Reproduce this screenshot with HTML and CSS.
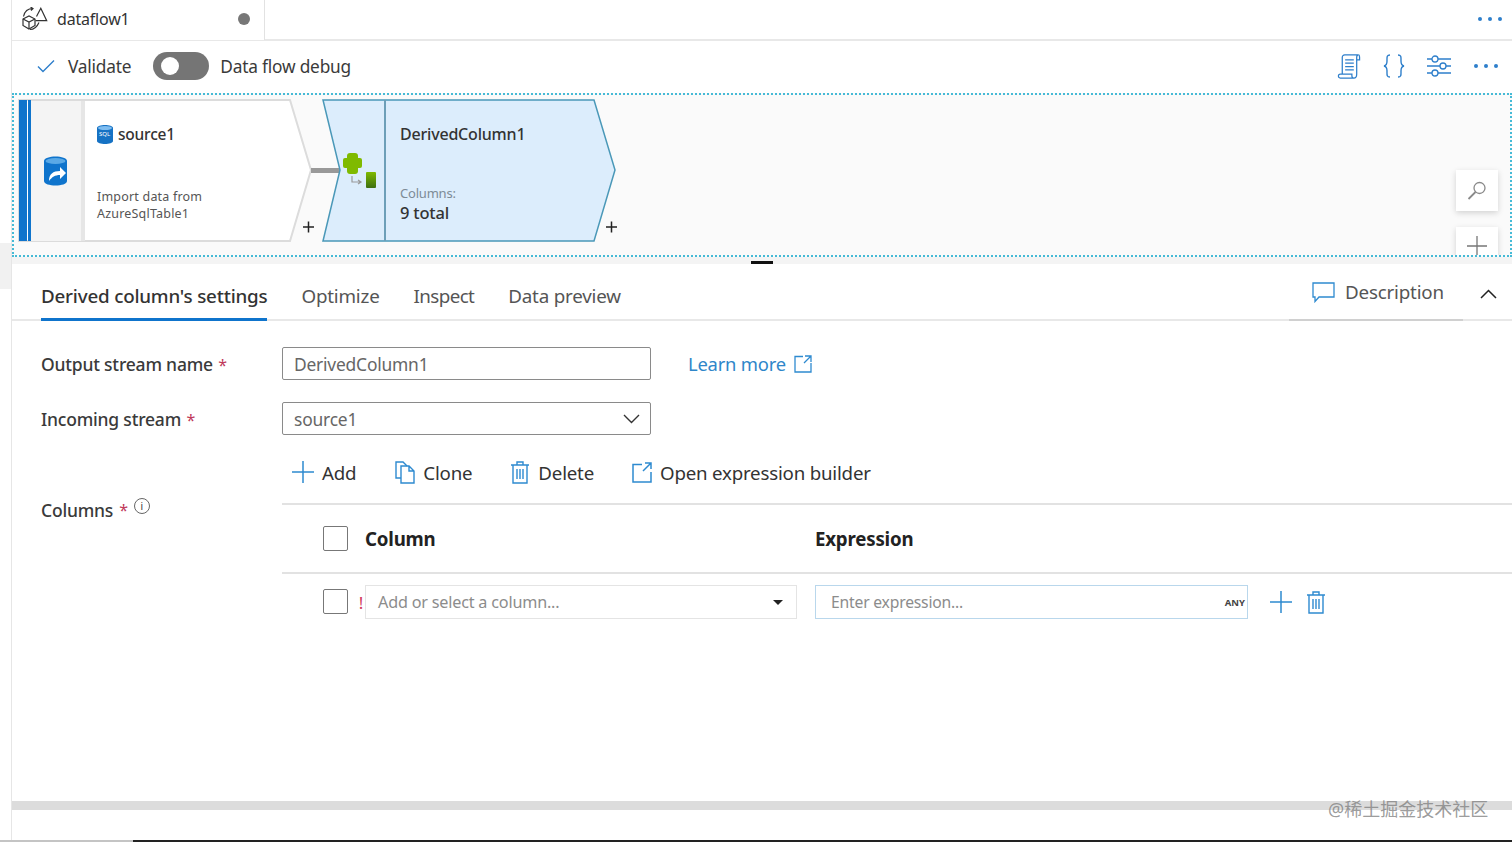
FILE: index.html
```html
<!DOCTYPE html>
<html lang="en">
  <head>
    <meta charset="UTF-8" />
    <meta name="viewport" content="width=device-width, initial-scale=1.0" />
    <title>dataflow1</title>
    <link rel="stylesheet" href="styles.css">
  </head>
  <body>
    <div class="side-strip"></div>
    <div class="app">
      <div class="tabbar">
        <div class="doc-tab">
          <svg class="doc-icon" width="26" height="24" viewBox="0 0 26 24" fill="none" stroke="#333" stroke-width="1.2">
            <path d="M1 12 7 9 13 12V18.500L7 22 1 18.500Z" />
            <path d="M1 12 7 15 13 12M7 15V22" />
            <path d="M13.500 13.700H24.700L18.800 1.300 14.500 9.500" />
            <path d="M1.500 9.500C2.500 4.500 6 1.500 11 1.500M8.500 0 11 1.500 9 3.500" />
            <path d="M8 22.500C11.500 22.500 15 20 17 15.500" />
          </svg>
          <span class="doc-name">dataflow1</span>
          <span class="doc-dot"></span>
        </div>
        <div class="dots tab-dots"><i></i><i></i><i></i></div>
      </div>

      <div class="toolbar">
        <svg class="check" width="18" height="14" viewBox="0 0 18 14" fill="none" stroke="#2e7fcb" stroke-width="1.4">
          <path d="M1 7.500 6 12.500 17 1.500" />
        </svg>
        <span class="validate">Validate</span>
        <span class="switch"><i></i></span>
        <span class="debug">Data flow debug</span>
        <div class="toolbar-right">
          <svg width="24" height="25" viewBox="0 0 24 26" fill="none" stroke="#2e7fcb" stroke-width="1.3">
            <path d="M5 21V3.500C5 2 6 1 7.500 1H22C20.500 1 20 2 20 3.500V21C20 23 19 25 17 25H3C1.500 25 1 24 1 23 1 22 1.500 21 3 21H15V23C15 24 16 25 17 25" />
            <path d="M20 6H23V3.500C23 2 22.500 1 22 1" />
            <path d="M8 6H17M8 9.500H17M8 13H17M8 16.500H17" />
          </svg>
          <svg class="braces" width="22" height="24" viewBox="0 0 22 24" fill="none" stroke="#2e7fcb" stroke-width="1.4">
            <path d="M7 1C3.500 1 4 3.500 4 7 4 10 3.500 11.500 1 12 3.500 12.500 4 14 4 17 4 20.500 3.500 23 7 23" />
            <path d="M15 1C18.500 1 18 3.500 18 7 18 10 18.500 11.500 21 12 18.500 12.500 18 14 18 17 18 20.500 18.500 23 15 23" />
          </svg>
          <svg width="24" height="22" viewBox="0 0 24 22" fill="none" stroke="#2e7fcb" stroke-width="1.3">
            <path d="M0 4H5M11 4H24M0 11H13M19 11H24M0 18H5M11 18H24" />
            <circle cx="8" cy="4" r="3" /><circle cx="16" cy="11" r="3" /><circle cx="8" cy="18" r="3" />
          </svg>
          <div class="dots"><i></i><i></i><i></i></div>
        </div>
      </div>

      <div class="canvas">
        <svg class="diagram" width="620" height="160" viewBox="14 95 620 160">
          <defs>
            <linearGradient id="leaf" x1="0" y1="0" x2="0" y2="1">
              <stop offset="0" stop-color="#7fba00" />
              <stop offset="1" stop-color="#3d6f12" />
            </linearGradient>
          </defs>
          <!-- source node -->
          <path d="M19 100H290L311 170 290 241H19Z" fill="#fff" stroke="#dcdcdc" stroke-width="2" />
          <rect x="31" y="101" width="50" height="140" fill="#f4f4f4" />
          <rect x="81" y="101" width="4" height="140" fill="#e6e6e6" />
          <rect x="19" y="100" width="8" height="141" fill="#0f74cc" />
          <rect x="28" y="100" width="3" height="141" fill="#0f74cc" />
          <path d="M44 161C44 155 67 155 67 161V181C67 187 44 187 44 181Z" fill="#0f74cc" />
          <ellipse cx="55.500" cy="161" rx="10" ry="3" fill="#5aa9e6" />
          <path d="M49 181C49 174 53 171 60 171V167L66 173 60 179V175C55 175 52 177 49 181Z" fill="#fff" />
          <path d="M97 128C97 124 113 124 113 128V141C113 145 97 145 97 141Z" fill="#1672c4" />
          <ellipse cx="105" cy="128" rx="7" ry="2" fill="#7fbdf0" />

          <!-- connector -->
          <rect x="311" y="168" width="29" height="5" fill="#999" />

          <!-- derived column node -->
          <path d="M323 100H594L615 170 594 241H323L340 170Z" fill="#dcedfc" stroke="#4a98b8" stroke-width="1.5" />
          <rect x="384" y="100" width="2" height="141" fill="#6d9fb8" />
          <rect x="347" y="153" width="11" height="21" rx="3" fill="#7fba00" />
          <rect x="343" y="158" width="19" height="10" rx="2" fill="#7fba00" />
          <path d="M352 176V182H361M358 180 361 182 358 184" fill="none" stroke="#999" stroke-width="1.2" />
          <rect x="366" y="172" width="10" height="16" rx="1" fill="url(#leaf)" />

          <path d="M303 227H314M308.500 221.500V232.500M606 227H617M611.500 221.500V232.500" stroke="#222" stroke-width="1.5" />
        </svg>
        <span class="node-title source-title">source1</span>
        <span class="sql-tag">SQL</span>
        <span class="node-desc">Import data from<br />AzureSqlTable1</span>
        <span class="node-title derived-title">DerivedColumn1</span>
        <span class="node-label">Columns:</span>
        <span class="node-total">9 total</span>

        <div class="zoom-card search-card">
          <svg width="20" height="20" viewBox="0 0 20 20" fill="none" stroke="#8a8a8a" stroke-width="1.3">
            <circle cx="12.500" cy="7" r="5.500" /><path d="M8.500 11 1.500 18" stroke-width="1.8" />
          </svg>
        </div>
        <div class="zoom-card plus-card">
          <svg width="20" height="20" viewBox="0 0 20 20" stroke="#777" stroke-width="1.3"><path d="M0 10H20M10 0V20" /></svg>
        </div>
      </div>

      <div class="splitter"><i></i></div>

      <div class="tabs">
        <span class="tab active">Derived column's settings</span>
        <span class="tab">Optimize</span>
        <span class="tab tab-inspect">Inspect</span>
        <span class="tab">Data preview</span>
        <div class="tabs-right">
          <div class="description">
            <svg width="23" height="21" viewBox="0 0 23 21" fill="none" stroke="#2e8ad0" stroke-width="1.3">
              <path d="M1 1H22V15H7L3 19.500V15H1Z" />
            </svg>
            <span>Description</span>
          </div>
          <svg class="collapse" width="17" height="10" viewBox="0 0 17 10" fill="none" stroke="#222" stroke-width="1.5">
            <path d="M1 9 8.500 1.500 16 9" />
          </svg>
        </div>
      </div>

      <div class="form">
        <div class="row first-row">
          <label class="label">Output stream name <em>*</em></label>
          <div class="field">DerivedColumn1</div>
          <a class="learn">Learn more
            <svg width="18" height="18" viewBox="0 0 18 18" fill="none" stroke="#2e8ad0" stroke-width="1.3">
              <path d="M9 1.500H1V17H17V8M11 1H17V7M17 1 10 8" />
            </svg>
          </a>
        </div>
        <div class="row second-row">
          <label class="label">Incoming stream <em>*</em></label>
          <div class="field">source1
            <svg class="chevron" width="17" height="10" viewBox="0 0 17 10" fill="none" stroke="#333" stroke-width="1.4">
              <path d="M1 1 8.500 8.500 16 1" />
            </svg>
          </div>
        </div>
        <div class="actions">
          <span class="action add">
            <svg width="22" height="22" viewBox="0 0 22 22" stroke="#2e8ad0" stroke-width="1.5"><path d="M0 11H22M11 0V22" /></svg>Add
          </span>
          <span class="action">
            <svg width="20" height="23" viewBox="0 0 20 23" fill="none" stroke="#2e8ad0" stroke-width="1.4">
              <path d="M6 17H1V1H8L12 5" /><path d="M6 5H14L19 10V22H6ZM14 5V10H19" />
            </svg>Clone
          </span>
          <span class="action">
            <svg class="action-trash" width="18" height="23" viewBox="0 0 18 23" fill="none" stroke="#2e8ad0" stroke-width="1.4">
              <path d="M0 4H18M6 4V1H12V4M2 4V22H16V4M6 8V18M9 8V18M12 8V18" />
            </svg>Delete
          </span>
          <span class="action">
            <svg width="20" height="21" viewBox="0 0 20 21" fill="none" stroke="#2e8ad0" stroke-width="1.5">
              <path d="M10 2.500H1V20H19V10M13 1H19V7M19 1 11 9" />
            </svg>Open expression builder
          </span>
        </div>
        <div class="row columns-row">
          <label class="label columns-label">Columns <em>*</em>
            <span class="info">i</span>
          </label>
          <div class="table">
            <div class="table-head">
              <span class="box"></span>
              <span class="col-name">Column</span>
              <span class="col-expr">Expression</span>
            </div>
            <div class="table-row">
              <span class="box"></span>
              <span class="bang">!</span>
              <div class="col-select"><span class="col-ph">Add or select a column...</span><i class="caret"></i></div>
              <div class="expr-input">Enter expression...<span class="any">ANY</span></div>
              <svg class="row-add" width="22" height="22" viewBox="0 0 22 22" stroke="#2e8ad0" stroke-width="1.5"><path d="M0 11H22M11 0V22" /></svg>
              <svg width="18" height="23" viewBox="0 0 18 23" fill="none" stroke="#2e8ad0" stroke-width="1.4">
                <path d="M0 4H18M6 4V1H12V4M2 4V22H16V4M6 8V18M9 8V18M12 8V18" />
              </svg>
            </div>
          </div>
        </div>
      </div>

      <div class="scrollbar"></div>
    </div>
    <div class="bottom-edge"></div>
    <div class="watermark">@稀土掘金技术社区</div>
  </body>
</html>
```

FILE: styles.css
```css
* {
  margin: 0;
  padding: 0;
  box-sizing: border-box;
}
html,
body {
  height: 100%;
  overflow: hidden;
  background: #fff;
}
body {
  position: relative;
  font-family: "Noto Sans", "Noto Sans CJK SC", sans-serif;
  font-size: 18.7px;
  letter-spacing: -0.2px;
  color: #3a3a3a;
}
svg {
  display: block;
  flex: none;
}
.side-strip {
  position: absolute;
  left: 0;
  top: 243px;
  width: 11px;
  height: 46px;
  background: #f1f1f1;
}
.app {
  margin-left: 11px;
  height: 840px;
  border-left: 1px solid #e6e6e6;
}

/* tab bar */
.tabbar {
  display: flex;
  align-items: center;
  height: 41px;
  border-bottom: 2px solid #e8e8e8;
}
.doc-tab {
  display: flex;
  align-items: center;
  width: 253px;
  height: 41px;
  padding-left: 10px;
  background: #fff;
  border-right: 1px solid #e2e2e2;
}
.doc-icon {
  margin-right: 9px;
  margin-top: -2px;
}
.doc-name {
  margin-top: -2px;
  font-size: 16px;
  color: #333;
}
.doc-dot {
  width: 12px;
  height: 12px;
  margin-left: auto;
  margin-right: 14px;
  margin-top: -2px;
  border-radius: 50%;
  background: #777;
}
.dots {
  display: flex;
  gap: 6px;
}
.dots i {
  width: 4px;
  height: 4px;
  border-radius: 50%;
  background: #2e7fcb;
}
.tab-dots {
  margin-left: auto;
  margin-right: 10px;
  margin-top: -1px;
}

/* toolbar */
.toolbar {
  display: flex;
  align-items: center;
  height: 52px;
  padding-left: 25px;
  padding-bottom: 2px;
  font-size: 17.3px;
}
.validate {
  margin-left: 13px;
  margin-top: 1px;
}
.switch {
  display: flex;
  align-items: center;
  width: 56px;
  height: 28px;
  margin-left: 22px;
  padding-left: 8px;
  border-radius: 14px;
  background: #757575;
}
.switch i {
  width: 18px;
  height: 18px;
  border-radius: 50%;
  background: #fff;
}
.debug {
  margin-left: 11px;
}
.toolbar-right {
  display: flex;
  align-items: center;
  margin-left: auto;
  margin-right: 14px;
}
.braces {
  margin-left: 22px;
  margin-right: 22px;
}
.toolbar-right .dots {
  margin-left: 23px;
}

/* canvas */
.canvas {
  position: relative;
  height: 164px;
  overflow: hidden;
  border: 2px dotted #45bad6;
  background: #fafafa;
}
.diagram {
  position: absolute;
  left: 0;
  top: 0;
}
.node-title {
  position: absolute;
  top: 28px;
  font-size: 16px;
  font-weight: 500;
  color: #333;
}
.source-title {
  left: 104px;
  font-size: 15.5px;
}
.derived-title {
  left: 386px;
}
.sql-tag {
  position: absolute;
  left: 85px;
  top: 35px;
  font-size: 6px;
  letter-spacing: 0;
  color: #fff;
}
.node-desc {
  position: absolute;
  left: 83px;
  top: 93px;
  font-size: 12.5px;
  line-height: 17px;
  letter-spacing: 0.2px;
  color: #555;
}
.node-label {
  position: absolute;
  left: 386px;
  top: 89px;
  font-size: 13px;
  color: #7d8b96;
}
.node-total {
  position: absolute;
  left: 386px;
  top: 106px;
  font-size: 16.5px;
  font-weight: 500;
  color: #333;
}
.zoom-card {
  position: absolute;
  left: 1442px;
  display: flex;
  align-items: center;
  justify-content: center;
  width: 42px;
  background: #fff;
  box-shadow: 0 2px 6px rgba(0, 0, 0, 0.16);
}
.search-card {
  top: 75px;
  height: 41px;
}
.plus-card {
  top: 132px;
  height: 40px;
  padding-bottom: 3px;
}

/* splitter */
.splitter {
  position: relative;
  height: 7px;
  background: #f4f4f4;
}
.splitter i {
  position: absolute;
  left: 739px;
  bottom: 0;
  width: 22px;
  height: 3px;
  background: #111;
}

/* settings tabs */
.tabs {
  display: flex;
  align-items: stretch;
  gap: 34px;
  height: 57px;
  padding-left: 29px;
  border-bottom: 2px solid #e8e8e8;
  font-size: 18.8px;
}
.tab {
  display: flex;
  align-items: center;
  height: 57px;
  padding-top: 6px;
  color: #555;
}
.tab.active {
  color: #333;
  font-weight: 500;
  box-shadow: inset 0 -3px 0 #0f74cc;
}
.tab-inspect {
  letter-spacing: -0.6px;
}
.tabs-right {
  display: flex;
  align-items: center;
  margin-left: auto;
  height: 57px;
}
.description {
  display: flex;
  align-items: center;
  gap: 10px;
  width: 174px;
  height: 57px;
  padding-left: 23px;
  padding-top: 1px;
  border-bottom: 2px solid #d0d0d0;
  color: #555;
}
.collapse {
  margin-left: 17px;
  margin-right: 15px;
  margin-top: 3px;
}

/* form */
.form {
  padding-left: 29px;
}
.row {
  display: flex;
  align-items: center;
}
.first-row {
  margin-top: 26px;
}
.second-row {
  margin-top: 22px;
}
.label {
  width: 241px;
  font-size: 17.5px;
  font-weight: 500;
  color: #3a3a3a;
}
.label em {
  font-style: normal;
  font-weight: 400;
  font-size: 16px;
  color: #c0395a;
  margin-left: 1px;
}
.field {
  display: flex;
  align-items: center;
  justify-content: space-between;
  width: 369px;
  height: 33px;
  padding: 0 10px 0 11px;
  border: 1px solid #8a8a8a;
  border-radius: 2px;
  font-size: 17.4px;
  color: #666;
}
.learn {
  display: flex;
  align-items: center;
  gap: 8px;
  margin-left: 37px;
  font-size: 18.4px;
  color: #2e86c9;
}
.actions {
  display: flex;
  align-items: center;
  gap: 38px;
  height: 68px;
  padding-top: 6px;
  padding-left: 251px;
  color: #333;
}
.action {
  display: flex;
  align-items: center;
  gap: 8px;
}
.add {
  margin-right: 1px;
}
.action-trash {
  margin-left: 1px;
  margin-right: 1px;
}
.columns-row {
  align-items: flex-start;
}
.columns-label {
  display: flex;
  align-items: center;
  margin-top: -5px;
}
.columns-label em {
  margin-left: 6px;
}
.info {
  display: flex;
  align-items: center;
  justify-content: center;
  width: 16px;
  height: 16px;
  margin-left: 6px;
  margin-top: -9px;
  border: 1px solid #666;
  border-radius: 50%;
  font-size: 10px;
  font-weight: 400;
  letter-spacing: 0;
}
.table {
  flex: 1;
}
.table-head {
  display: flex;
  align-items: center;
  height: 71px;
  padding-left: 41px;
  border-top: 2px solid #e2e2e2;
  border-bottom: 2px solid #e2e2e2;
  font-weight: 700;
  color: #222;
}
.box {
  flex: none;
  width: 25px;
  height: 25px;
  border: 1px solid #777;
  border-radius: 2px;
  background: #fff;
}
.col-name {
  width: 450px;
  margin-left: 17px;
}
.table-row {
  display: flex;
  align-items: center;
  height: 56px;
  padding-left: 41px;
  color: #8c8c8c;
  font-size: 15.7px;
}
.table-row .box {
  margin-top: -1px;
}
.bang {
  width: 17px;
  text-align: right;
  padding-right: 2px;
  font-size: 17px;
  color: #d13a5c;
}
.col-select {
  display: flex;
  align-items: center;
  justify-content: space-between;
  width: 432px;
  height: 34px;
  padding: 0 13px;
  border: 1px solid #e4e4e4;
}
.col-ph {
  font-size: 16.2px;
  margin-left: -1px;
}
.caret {
  width: 0;
  height: 0;
  border-left: 5px solid transparent;
  border-right: 5px solid transparent;
  border-top: 5px solid #222;
}
.expr-input {
  display: flex;
  align-items: center;
  justify-content: space-between;
  width: 433px;
  height: 34px;
  margin-left: 18px;
  padding: 0 2px 0 15px;
  border: 1px solid #b9d7ec;
}
.any {
  font-size: 9.5px;
  font-weight: 700;
  letter-spacing: 0;
  color: #444;
}
.row-add {
  margin-left: 22px;
  margin-right: 15px;
}

/* bottom */
.scrollbar {
  position: absolute;
  left: 12px;
  right: 0;
  top: 801px;
  height: 9px;
  background: #dcdcdc;
}
.bottom-edge {
  position: absolute;
  left: 0;
  right: 0;
  top: 840px;
  height: 2px;
  background: linear-gradient(to right, #c4c4c4 133px, #222 133px);
}
.watermark {
  position: absolute;
  left: 1328px;
  top: 795px;
  font-size: 18px;
  letter-spacing: 0;
  color: rgba(130, 130, 130, 0.8);
}
```
